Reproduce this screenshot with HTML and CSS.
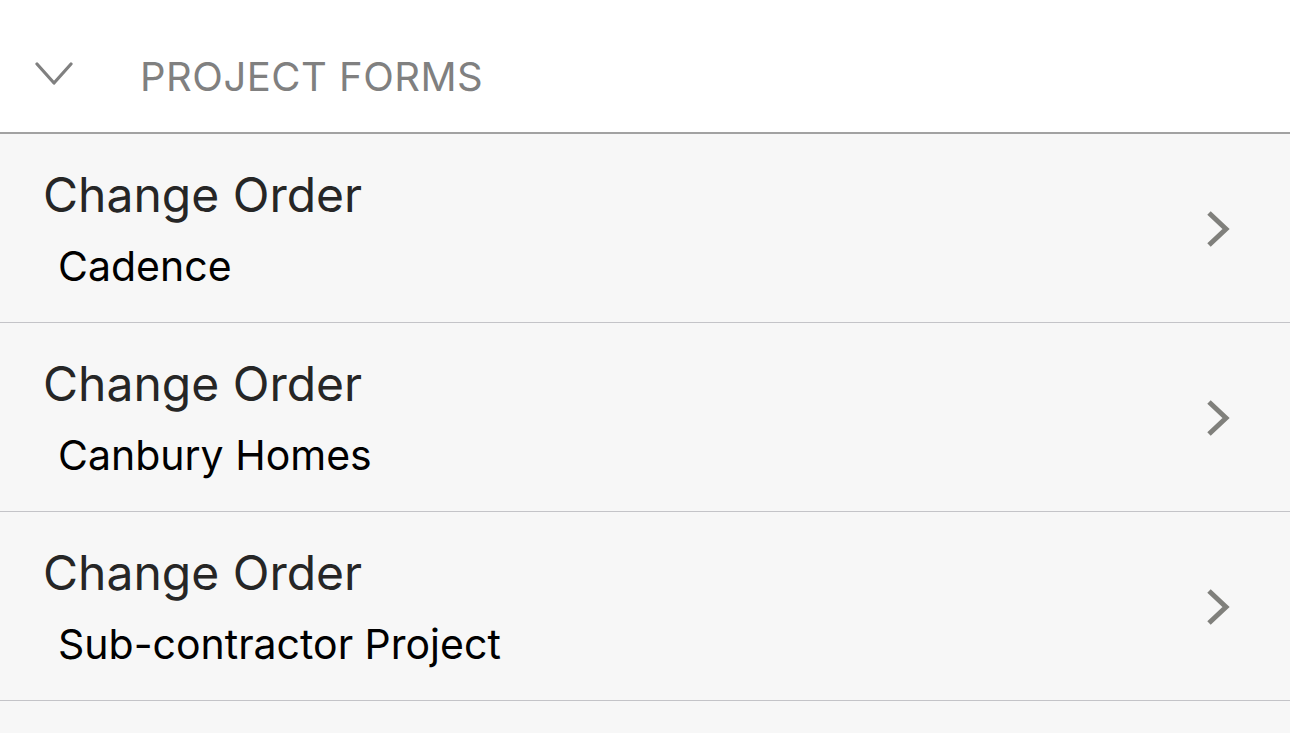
FILE: index.html
```html
<!DOCTYPE html>
<html lang="en">
<head>
  <meta charset="UTF-8" />
  <meta name="viewport" content="width=device-width, initial-scale=1.0"/>
  <title>Project Forms</title>
  <link rel="stylesheet" href="styles.css">
</head>
<body>

<!-- Section header -->
<div class="section-head">
  <svg class="toggle" width="38" height="26" viewBox="0 0 38 26">
    <path d="M2 3 L19 22 L36 3" fill="none" stroke="#808080" stroke-width="3.2" stroke-linecap="round" stroke-linejoin="round"/>
  </svg>
  <span class="section-title">PROJECT FORMS</span>
</div>

<!-- Form list -->
<div class="list">
  <div class="row">
    <div class="row-text">
      <div class="row-title">Change Order</div>
      <div class="row-sub">Cadence</div>
    </div>
    <svg class="chev" width="26" height="38" viewBox="0 0 26 38">
      <path d="M4 3 L21 19 L4 35" fill="none" stroke="#80807c" stroke-width="5"/>
    </svg>
  </div>
  <div class="row">
    <div class="row-text">
      <div class="row-title">Change Order</div>
      <div class="row-sub">Canbury Homes</div>
    </div>
    <svg class="chev" width="26" height="38" viewBox="0 0 26 38">
      <path d="M4 3 L21 19 L4 35" fill="none" stroke="#80807c" stroke-width="5"/>
    </svg>
  </div>
  <div class="row">
    <div class="row-text">
      <div class="row-title">Change Order</div>
      <div class="row-sub">Sub-contractor Project</div>
    </div>
    <svg class="chev" width="26" height="38" viewBox="0 0 26 38">
      <path d="M4 3 L21 19 L4 35" fill="none" stroke="#80807c" stroke-width="5"/>
    </svg>
  </div>
  <div class="row empty"></div>
</div>

</body>
</html>
```

FILE: styles.css
```css
body {
  margin: 0;
  font-family: 'Inter', 'Roboto', sans-serif;
  background: #f7f7f7;
  overflow: hidden;
}
.section-head {
  display: flex;
  align-items: center;
  height: 134px;
  box-sizing: border-box;
  background: white;
  border-bottom: 2px solid #a2a2a2;
  padding: 20px 0 0 35px;
}
.toggle {
  margin-right: 67px;
  margin-top: -4px;
}
.section-title {
  font-size: 40px;
  color: #808080;
  letter-spacing: 0.5px;
}
.row {
  display: flex;
  align-items: center;
  justify-content: space-between;
  height: 189px;
  box-sizing: border-box;
  border-bottom: 1px solid #c4c4c8;
  padding: 0 59px 0 43px;
}
.row-text {
  display: flex;
  flex-direction: column;
}
.row-title {
  font-size: 48px;
  color: #262626;
  line-height: 58px;
}
.row-sub {
  font-size: 41px;
  color: #000;
  line-height: 48px;
  padding-left: 15px;
  margin-top: 18px;
}
.chev {
  margin-top: 2px;
}
.row.empty {
  border-bottom: none;
}
```
